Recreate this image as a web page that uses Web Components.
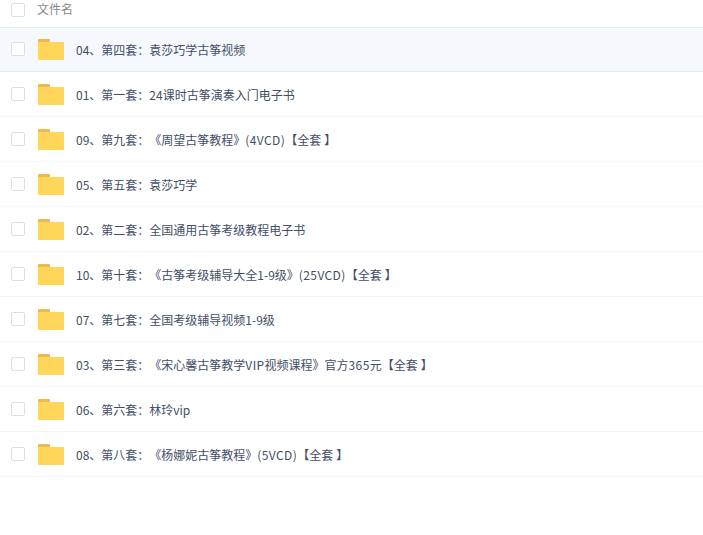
<!DOCTYPE html>
<html><head><meta charset="utf-8"><style>
html,body{margin:0;padding:0;background:#fff}
body{font:12px "Noto Sans CJK SC","Noto Sans",sans-serif;color:#424e67;overflow:hidden;text-spacing-trim:space-all}
.l{letter-spacing:.4px}
.r{margin:0 -3px 0 3px}
</style></head><body>
<file-list>
<file-header>文件名</file-header>
<file-row active>04、第四套：袁莎巧学古筝视频</file-row>
<file-row>01、第一套：24课时古筝演奏入门电子书</file-row>
<file-row>09、第九套：《周望古筝教程》<span class="l">(4VCD)</span>【全套<span class="r">】</span></file-row>
<file-row>05、第五套：袁莎巧学</file-row>
<file-row>02、第二套：全国通用古筝考级教程电子书</file-row>
<file-row>10、第十套：《古筝考级辅导大全1-9级》<span class="l">(25VCD)</span>【全套<span class="r">】</span></file-row>
<file-row>07、第七套：全国考级辅导视频1-9级</file-row>
<file-row>03、第三套：《宋心馨古筝教学<span class="l">VIP</span>视频课程》官方<span class="l">365</span>元【全套<span class="r">】</span></file-row>
<file-row>06、第六套：林玲vip</file-row>
<file-row>08、第八套：《杨娜妮古筝教程》<span class="l">(5VCD)</span>【全套<span class="r">】</span></file-row>
</file-list>
<script>
const box='<span class="cb"></span>';
class FileList extends HTMLElement{constructor(){super();this.attachShadow({mode:'open'}).innerHTML='<style>:host{display:block;width:703px}</style><slot></slot>';}}
class FileHeader extends HTMLElement{constructor(){super();this.attachShadow({mode:'open'}).innerHTML=`<style>
:host{display:flex;align-items:flex-start;height:27px;border-bottom:1px solid #e6ebf2;color:#888}
.cb{width:12px;height:12px;border:1px solid #dbe0e8;border-radius:2px;background:#fff;margin:3px 0 0 11px;flex:none}
.t{margin-left:12px;line-height:17px}
</style>${box}<span class="t"><slot></slot></span>`;}}
class FileRow extends HTMLElement{constructor(){super();this.attachShadow({mode:'open'}).innerHTML=`<style>
:host{display:flex;align-items:flex-start;box-sizing:border-box;height:45px;padding-top:1px;border-bottom:1px solid #f1f5fa;background:#fff}
:host([active]){background:#f5f8fd;border-bottom-color:#e6ebf2;height:44px;padding-top:0}
.cb{width:12px;height:12px;border:1px solid #dbe0e8;border-radius:2px;background:#fff;margin:14px 0 0 11px;flex:none}
svg{margin:11px 0 0 13px;flex:none;display:block}
.t{margin-left:12px;margin-top:13px;line-height:18px;white-space:nowrap}
</style>${box}<svg width="26" height="21" viewBox="0 0 26 21"><path d="M1 0h10a1 1 0 0 1 1 1V4H0V1a1 1 0 0 1 1-1z" fill="#e8bc4e"/><path d="M1 3h24a1 1 0 0 1 1 1v16a1 1 0 0 1-1 1H1a1 1 0 0 1-1-1V4a1 1 0 0 1 1-1z" fill="#ffd659"/></svg><span class="t"><slot></slot></span>`;}}
customElements.define('file-list',FileList);customElements.define('file-header',FileHeader);customElements.define('file-row',FileRow);
</script>
</body></html>
